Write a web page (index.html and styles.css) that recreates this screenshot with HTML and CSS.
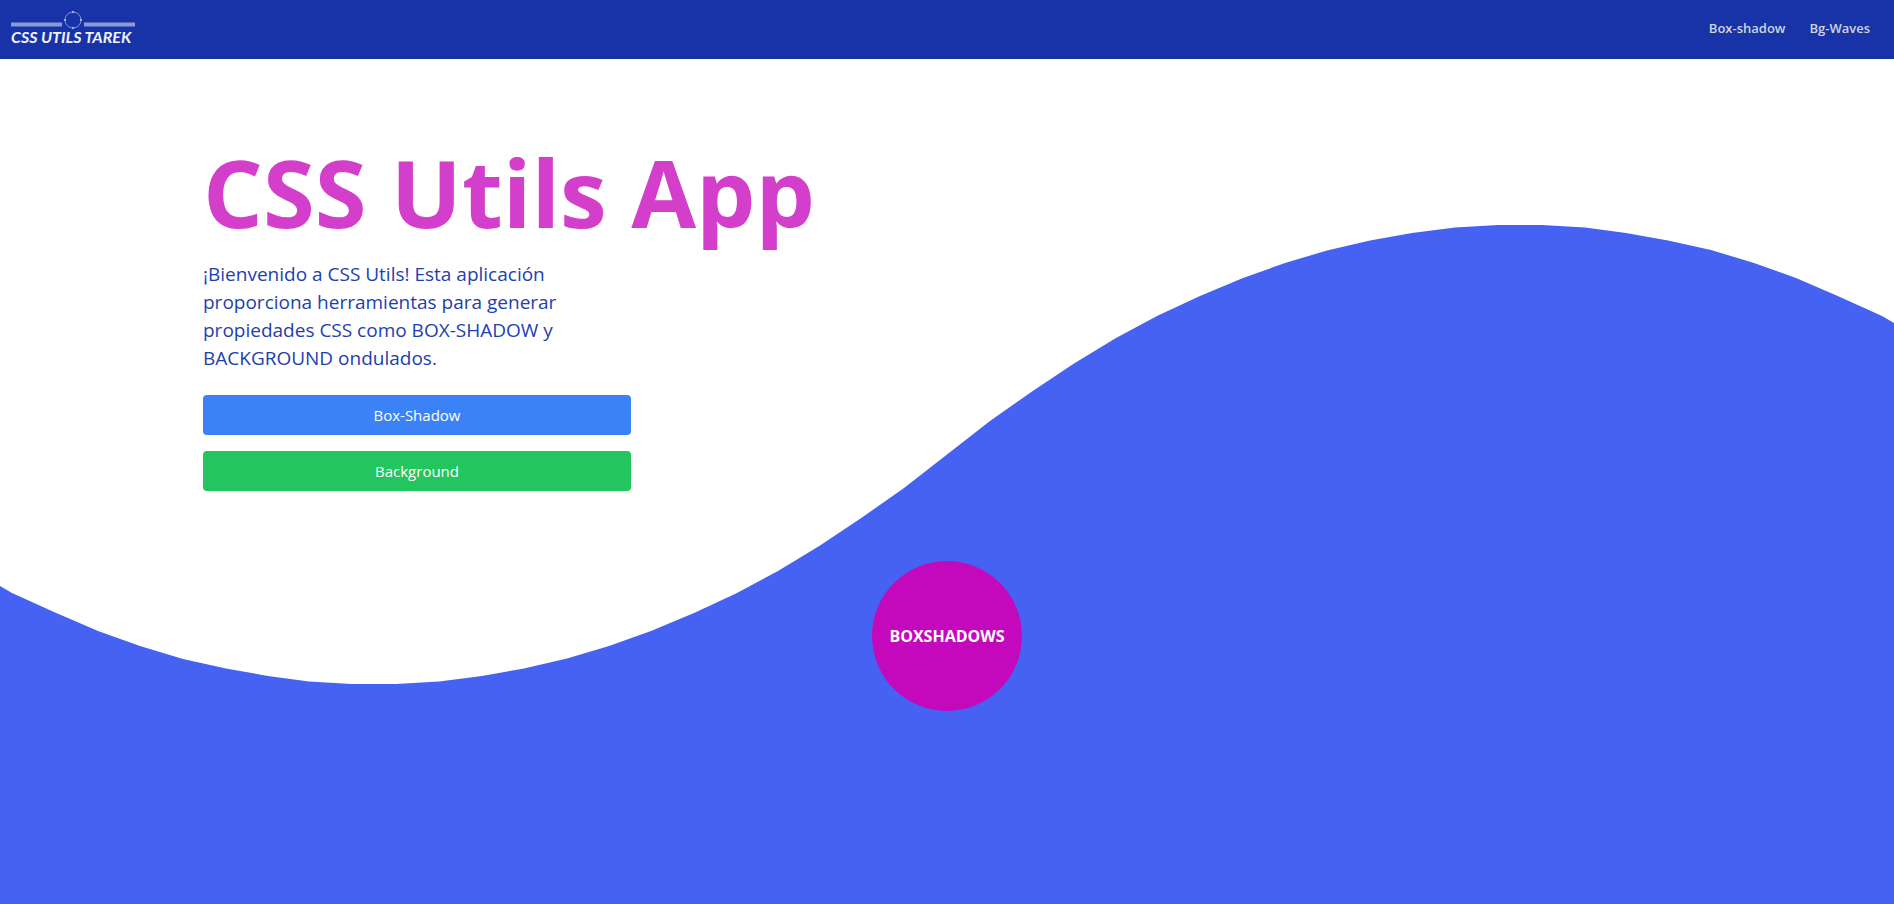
FILE: index.html
```html
<!DOCTYPE html>
<html lang="es">
<head>
<meta charset="utf-8">
<meta name="viewport" content="width=device-width, initial-scale=1">
<title>CSS Utils App</title>
<link rel="stylesheet" href="styles.css">
</head>
<body>
<div class="page">
  <svg class="wave" viewBox="0 0 1894 904" preserveAspectRatio="none" aria-hidden="true">
    <path d="M0 586 12 593 54 612 98 631 140 646 183 659 226 668.500 268 676 309 681.500 352 684 396 684 439 681.500 482 676 524 668.500 567 658.500 609 646 651 631 694 613 736 593.500 778 571 820 545.500 862 517.500 904 488 947 454.500 990 421 1032 391.500 1074 363.500 1116 338 1158 315.500 1200 296 1243 278 1285 263 1327 250.500 1370 240.500 1412 233 1455 227.500 1498 225 1542 225 1585 227.500 1626 233 1668 240.500 1711 250 1754 263 1796 278 1840 297 1882 316 1894 323V904H0Z"/>
  </svg>
  <header class="topbar">
    <a class="logo" href="#" aria-label="CSS Utils Tarek">
      <svg class="logo-mark" viewBox="0 0 124 18" aria-hidden="true">
        <path d="M0 13.500H51M73 13.500H124" stroke="#8b99d4" stroke-width="4"/>
        <circle cx="62" cy="9" r="8" fill="none" stroke="#8090d2" stroke-width="1"/>
        <path d="M62 0v2M62 16v2M53 9h2M69 9h2" stroke="#fff" stroke-width="1"/>
      </svg>
      <span class="logo-text">CSS UTILS TAREK</span>
    </a>
    <nav class="nav">
      <a href="#box-shadow">Box-shadow</a>
      <a href="#background">Bg-Waves</a>
    </nav>
  </header>
  <main class="hero">
    <h1 class="title">CSS Utils App</h1>
    <div class="intro">
      <p class="lead">¡Bienvenido a CSS Utils! Esta aplicación proporciona herramientas para generar propiedades CSS como BOX-SHADOW y BACKGROUND ondulados.</p>
      <a class="btn btn-blue" id="box-shadow" href="#box-shadow">Box-Shadow</a>
      <a class="btn btn-green" id="background" href="#background">Background</a>
    </div>
    <button class="bubble" type="button">BOXSHADOWS</button>
  </main>
</div>
</body>
</html>
```
FILE: styles.css
```css
* { box-sizing: border-box; }

body {
  margin: 0;
  background: #fff;
  font-family: "Segoe UI", "Open Sans", "Noto Sans", sans-serif;
  font-size: 16px;
  line-height: 24px;
}

a { color: inherit; text-decoration: none; }

.page {
  position: relative;
  isolation: isolate;
  min-height: 100vh;
}

.wave {
  position: absolute;
  inset: 0;
  z-index: -1;
  width: 100%;
  height: 100%;
  fill: #4562f2;
}

.topbar {
  display: flex;
  align-items: center;
  justify-content: space-between;
  height: 59px;
  padding: 0 24px 3px 11px;
  background: #1733a7;
}

.logo {
  display: flex;
  flex-direction: column;
  width: 124px;
  color: #f1f3fb;
}

.logo-mark { display: block; width: 100%; }

.logo-text {
  font: italic 700 16px/16px Lato, sans-serif;
  white-space: nowrap;
}

.nav {
  display: flex;
  gap: 24px;
  color: #d1d5db;
  font-size: 13px;
  font-weight: 600;
  line-height: 20px;
}

.hero {
  display: flex;
  flex-direction: column;
  max-width: 1536px;
  margin: 0 auto;
  padding: 85px 24px 0;
}

.title {
  margin: 0;
  color: #d33fcb;
  font-size: 94px;
  font-weight: 700;
  line-height: 96px;
}

.intro {
  display: flex;
  flex-direction: column;
  gap: 16px;
  max-width: 428px;
  margin-top: 20px;
}

.lead {
  max-width: 384px;
  margin: 0 0 7px;
  color: #1e40af;
  font-size: 19px;
  line-height: 28px;
}

.btn {
  padding: 8px 16px;
  border-radius: 4px;
  color: #fff;
  font-size: 15px;
  text-align: center;
}

.btn-blue { background: #3b82f6; }
.btn-green { background: #22c55e; }

.bubble {
  align-self: center;
  width: 150px;
  height: 150px;
  margin-top: 70px;
  padding: 0;
  border: 0;
  border-radius: 50%;
  background: #c409bd;
  color: #fff;
  font: inherit;
  font-weight: 700;
}
```
